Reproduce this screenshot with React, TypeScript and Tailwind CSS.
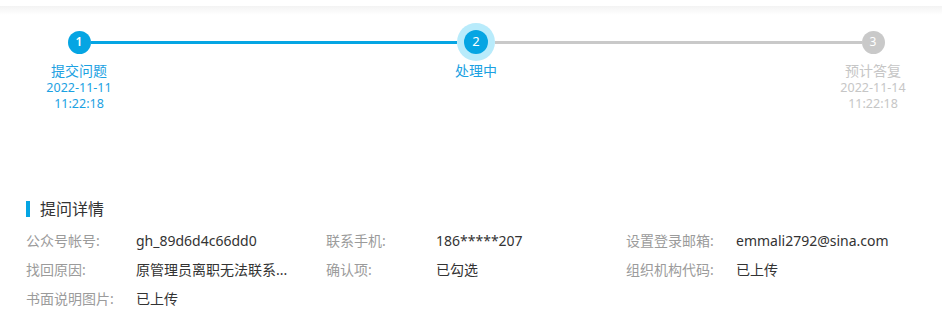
const BLUE = 'bg-[#05a5e3]';

const details = [
  [
    { label: '公众号帐号:', value: 'gh_89d6d4c66dd0' },
    { label: '联系手机:', value: '186*****207' },
    { label: '设置登录邮箱:', value: 'emmali2792@sina.com' },
  ],
  [
    { label: '找回原因:', value: '原管理员离职无法联系...' },
    { label: '确认项:', value: '已勾选' },
    { label: '组织机构代码:', value: '已上传' },
  ],
  [{ label: '书面说明图片:', value: '已上传' }],
];

function Line({ tone }: { tone: 'blue' | 'gray' | 'none' }) {
  const c = tone === 'blue' ? BLUE : tone === 'gray' ? 'bg-[#c9c9c9]' : 'bg-transparent';
  return <div className={`h-[3px] flex-1 ${c}`} />;
}

export default function App() {
  return (
    <div
      className="h-[326px] w-[942px] overflow-hidden bg-white"
      style={{ fontFamily: '"Noto Sans", "Noto Sans CJK SC", sans-serif' }}
    >
      <div className="mt-[6px] h-[9px] bg-gradient-to-b from-[#f3f3f3] to-white" />

      {/* steps */}
      <div className="ml-[29px] mt-[8px] flex w-[894px]">
        <div className="flex w-[100px] flex-col items-center">
          <div className="flex h-[38px] w-full items-center">
            <Line tone="none" />
            <div className={`flex h-[23px] w-[23px] items-center justify-center rounded-full ${BLUE} text-[12px] font-semibold text-white`}>
              1
            </div>
            <Line tone="blue" />
          </div>
          <div className="mt-[1px] text-[14px] leading-[18px] text-[#1ba1e2]">提交问题</div>
          <div className="text-center text-[12.5px] leading-[16px] text-[#1ba1e2]">
            2022-11-11
            <br />
            11:22:18
          </div>
        </div>

        <div className={`mt-[17.5px] h-[3px] flex-1 ${BLUE}`} />

        <div className="flex w-[100px] flex-col items-center">
          <div className="flex h-[38px] w-full items-center">
            <Line tone="blue" />
            <div className="flex h-[38px] w-[38px] items-center justify-center rounded-full bg-[#b8ebfb]">
              <div className={`flex h-[24px] w-[24px] items-center justify-center rounded-full ${BLUE} text-[13px] text-white`}>
                2
              </div>
            </div>
            <Line tone="gray" />
          </div>
          <div className="mt-[1px] text-[14px] leading-[18px] text-[#1ba1e2]">处理中</div>
        </div>

        <div className="mt-[17.5px] h-[3px] flex-1 bg-[#c9c9c9]" />

        <div className="flex w-[100px] flex-col items-center">
          <div className="flex h-[38px] w-full items-center">
            <Line tone="gray" />
            <div className="flex h-[23px] w-[23px] items-center justify-center rounded-full bg-[#c9c9c9] text-[12px] text-white">
              3
            </div>
            <Line tone="none" />
          </div>
          <div className="mt-[1px] text-[14px] leading-[18px] text-[#c6c6c6]">预计答复</div>
          <div className="text-center text-[12.5px] leading-[16px] text-[#c6c6c6]">
            2022-11-14
            <br />
            11:22:18
          </div>
        </div>
      </div>

      {/* details */}
      <div className="mt-[87px] pl-[26px]">
        <div className="flex items-center gap-[10px]">
          <div className="h-[16px] w-[4px] bg-[#05a5e3]" />
          <div className="text-[16px] leading-[20px] text-[#333]">提问详情</div>
        </div>
        <div className="mt-[7px]">
          {details.map((row, i) => (
            <div key={i} className="flex text-[14px] leading-[29px]">
              {row.map((d) => (
                <div key={d.label} className="flex w-[300px]">
                  <div className="w-[110px] text-[#9b9b9b]">{d.label}</div>
                  <div className="whitespace-nowrap text-[#333]">{d.value}</div>
                </div>
              ))}
            </div>
          ))}
        </div>
      </div>
    </div>
  );
}
